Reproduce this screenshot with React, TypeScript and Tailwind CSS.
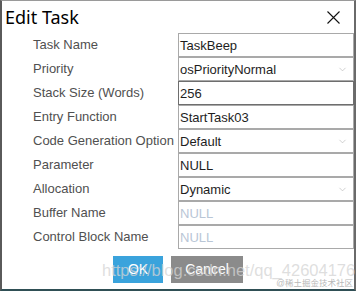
import { ChevronDown } from "lucide-react";

type Row = { label: string; value: string; kind?: "select" | "focus" | "placeholder" };

const rows: Row[] = [
  { label: "Task Name", value: "TaskBeep" },
  { label: "Priority", value: "osPriorityNormal", kind: "select" },
  { label: "Stack Size (Words)", value: "256", kind: "focus" },
  { label: "Entry Function", value: "StartTask03" },
  { label: "Code Generation Option", value: "Default", kind: "select" },
  { label: "Parameter", value: "NULL" },
  { label: "Allocation", value: "Dynamic", kind: "select" },
  { label: "Buffer Name", value: "NULL", kind: "placeholder" },
  { label: "Control Block Name", value: "NULL", kind: "placeholder" },
];

const Field = ({ row }: { row: Row }) => {
  const border = row.kind === "focus" ? "border-[#6e6e6e]" : "border-[#a9a9a9]";
  const color = row.kind === "placeholder" ? "text-[#b9c6d6]" : "text-[#1e1e1e]";
  return (
    <div className={`flex h-[24px] w-[176px] items-center justify-between border ${border} bg-white pl-[1px] pr-[5px]`}>
      <span className={`text-[13px] leading-none ${color}`}>{row.value}</span>
      {row.kind === "select" && <ChevronDown size={11} strokeWidth={1.2} className="text-[#aaaaaa]" />}
    </div>
  );
};

export default function App() {
  return (
    <div
      className="relative h-[291px] w-[356px] overflow-hidden bg-white"
      style={{ fontFamily: '"Liberation Sans", Arial, sans-serif' }}
    >
      <div className="flex h-full flex-col border-l-2 border-r-2 border-t border-b-2 border-l-[#5a5a5a] border-r-[#6a6a6a] border-t-[#9a9a9a] border-b-[#2f4f55]">
        {/* title bar */}
        <div className="flex h-[32px] items-center justify-between pl-[3px] pr-[14px]">
          <span className="text-[18px] text-black" style={{ fontFamily: '"Noto Sans", sans-serif' }}>
            Edit Task
          </span>
          <svg width="13" height="13" viewBox="0 0 13 13" className="mt-[1px]">
            <path d="M0.5 0.5 L12.5 12.5 M12.5 0.5 L0.5 12.5" stroke="#111" strokeWidth="1.1" />
          </svg>
        </div>

        {/* form */}
        <div className="flex flex-col pl-[31px]">
          {rows.map((r) => (
            <div key={r.label} className="flex h-[24px] items-center">
              <span className="w-[145px] text-[13px] text-[#505050]">{r.label}</span>
              <Field row={r} />
            </div>
          ))}
        </div>

        {/* buttons */}
        <div className="mt-[7px] flex gap-[8px] pl-[111px]">
          <button className="h-[27px] w-[50px] bg-[#3aa3dc] text-[14px] text-white">OK</button>
          <button className="h-[27px] w-[72px] bg-[#8b8b8b] text-[14px] text-white">Cancel</button>
        </div>
      </div>

      {/* watermarks */}
      <span className="pointer-events-none absolute left-[102px] top-[262px] text-[16.5px] leading-none text-[#d4d4d4]/75">
        https://blog.csdn.net/qq_42604176
      </span>
      <span
        className="pointer-events-none absolute right-[3px] top-[279px] text-[8.5px] leading-none text-[#b8b8b8]"
        style={{ fontFamily: '"Liberation Sans", "Noto Sans CJK SC", sans-serif' }}
      >
        @稀土掘金技术社区
      </span>
    </div>
  );
}
